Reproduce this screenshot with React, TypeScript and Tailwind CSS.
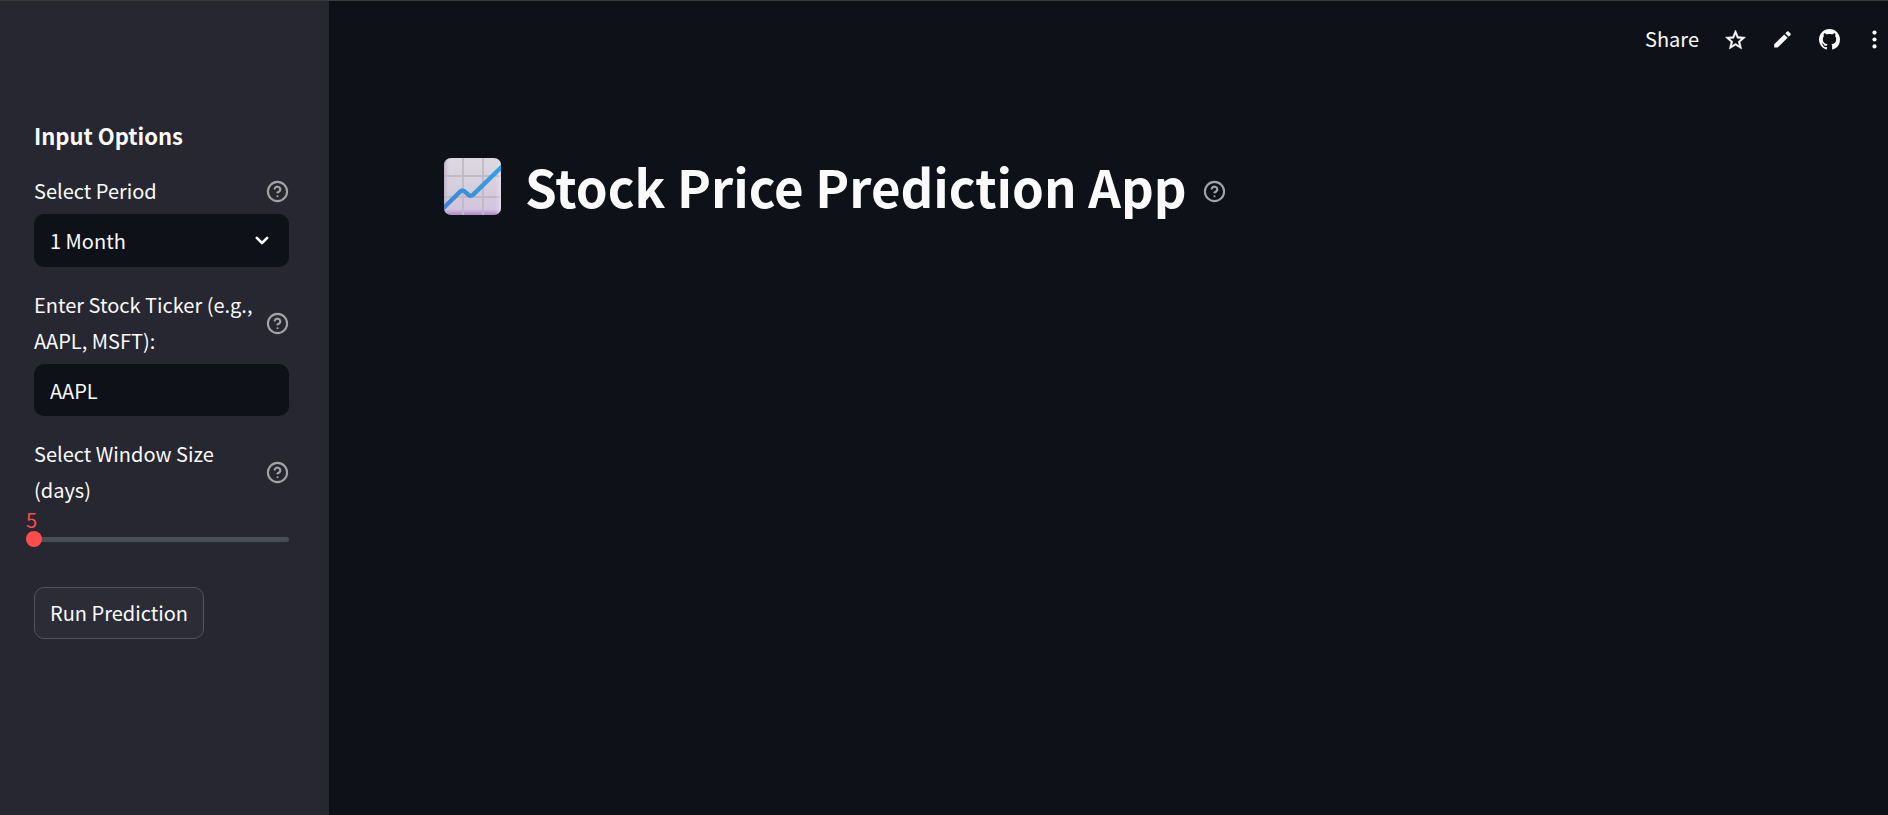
import { useState } from "react";

function HelpIcon() {
  return (
    <svg
      viewBox="0 0 24 24"
      className="size-[23px] shrink-0"
      fill="none"
      stroke="currentColor"
      strokeWidth="2.2"
      strokeLinecap="round"
      strokeLinejoin="round"
      aria-hidden="true"
    >
      <circle cx="12" cy="12" r="10" />
      <path d="M9.09 9a3 3 0 0 1 5.83 1c0 2-3 3-3 3" />
      <path d="M12 17h.01" />
    </svg>
  );
}

function HelpButton({ topic }: { topic: string }) {
  return (
    <button type="button" aria-label={`Help: ${topic}`} className="shrink-0 text-[#a3a3a7]">
      <HelpIcon />
    </button>
  );
}

function FieldLabel({ htmlFor, text }: { htmlFor: string; text: string }) {
  return (
    <div className="flex items-center justify-between gap-2">
      <label htmlFor={htmlFor} className="leading-9">
        {text}
      </label>
      <HelpButton topic={text} />
    </div>
  );
}

function ChartEmoji() {
  return (
    <svg viewBox="0 0 57 57" className="size-[57px] shrink-0" role="img" aria-label="Chart increasing">
      <defs>
        <linearGradient id="paper" x1="0" y1="0" x2="0" y2="1">
          <stop offset="0" stopColor="#dcd8df" />
          <stop offset="0.5" stopColor="#d6cedd" />
          <stop offset="0.9" stopColor="#d3c3df" />
          <stop offset="1" stopColor="#a98bc4" />
        </linearGradient>
        <linearGradient id="edge" x1="0" y1="0" x2="1" y2="0">
          <stop offset="0" stopColor="#b5a9bf" stopOpacity="0.8" />
          <stop offset="0.1" stopColor="#d6cedd" stopOpacity="0" />
          <stop offset="0.9" stopColor="#e6dfe9" stopOpacity="0" />
          <stop offset="1" stopColor="#e6dfe9" stopOpacity="0.8" />
        </linearGradient>
        <linearGradient id="trend" x1="0" y1="1" x2="1" y2="0">
          <stop offset="0" stopColor="#3f86d0" />
          <stop offset="1" stopColor="#2fa4ea" />
        </linearGradient>
        <clipPath id="sheet">
          <rect width="57" height="57" rx="7" />
        </clipPath>
      </defs>
      <g clipPath="url(#sheet)">
        <rect width="57" height="57" fill="url(#paper)" />
        <path d="M19 0v57M39 0v57M0 18h57M0 39h57" stroke="#bfb9c5" strokeWidth="1.8" />
        <rect width="57" height="57" fill="url(#edge)" />
        <path
          d="M-2 51.5 16.2 33.6Q18.4 31.4 20.6 33.4L24.4 36.8Q26.8 38.8 29.2 36.6L59 7.5"
          fill="none"
          stroke="url(#trend)"
          strokeWidth="4.4"
          strokeLinejoin="round"
        />
      </g>
    </svg>
  );
}

function Toolbar() {
  return (
    <header className="flex h-[76px] items-center justify-end gap-[26px] pr-[5px]">
      <button type="button" className="leading-9">
        Share
      </button>
      <button type="button" aria-label="Favorite">
        <svg
          viewBox="1.5 1 21 21"
          className="size-[21px]"
          fill="currentColor"
          stroke="currentColor"
          strokeWidth="0.5"
          aria-hidden="true"
        >
          <path d="m22 9.24-7.19-.62L12 2 9.19 8.63 2 9.24l5.46 4.73L5.82 21 12 17.27 18.18 21l-1.63-7.03zM12 15.4l-3.76 2.27 1-4.28-3.32-2.88 4.38-.38L12 6.1l1.71 4.04 4.38.38-3.32 2.88 1 4.28z" />
        </svg>
      </button>
      <button type="button" aria-label="Edit">
        <svg viewBox="0 0 21 21" className="size-[21px]" fill="currentColor" aria-hidden="true">
          <path d="M2.2 15.2 12.2 5.4l3.4 3.4L5.6 18.6H2.2zM13.3 4.3l1.8-1.8a1 1 0 0 1 1.4 0l2 2a1 1 0 0 1 0 1.4l-1.8 1.8z" />
        </svg>
      </button>
      <button type="button" aria-label="View source">
        <svg viewBox="0 0 16 16" className="size-[21px]" fill="currentColor" aria-hidden="true">
          <path d="M8 0C3.58 0 0 3.58 0 8c0 3.54 2.29 6.53 5.47 7.59.4.07.55-.17.55-.38 0-.19-.01-.82-.01-1.49-2.01.37-2.53-.49-2.69-.94-.09-.23-.48-.94-.82-1.13-.28-.15-.68-.52-.01-.53.63-.01 1.08.58 1.23.82.72 1.21 1.87.87 2.33.66.07-.52.28-.87.51-1.07-1.78-.2-3.64-.89-3.64-3.95 0-.87.31-1.59.82-2.15-.08-.2-.36-1.02.08-2.12 0 0 .67-.21 2.2.82.64-.18 1.32-.27 2-.27s1.36.09 2 .27c1.53-1.04 2.2-.82 2.2-.82.44 1.1.16 1.92.08 2.12.51.56.82 1.27.82 2.15 0 3.07-1.87 3.75-3.65 3.95.29.25.54.73.54 1.48 0 1.07-.01 1.93-.01 2.2 0 .21.15.46.55.38A8.01 8.01 0 0 0 16 8c0-4.42-3.58-8-8-8" />
        </svg>
      </button>
      <button type="button" aria-label="More options">
        <svg viewBox="0 0 17 21" className="h-[21px] w-[17px]" fill="currentColor" aria-hidden="true">
          <circle cx="8.5" cy="3.6" r="2.1" />
          <circle cx="8.5" cy="10.5" r="2.1" />
          <circle cx="8.5" cy="17.4" r="2.1" />
        </svg>
      </button>
    </header>
  );
}

export default function App() {
  const [period, setPeriod] = useState("1 Month");
  const [ticker, setTicker] = useState("AAPL");
  const [days, setDays] = useState(5);

  return (
    <div className="flex min-h-screen border-t border-[#3a3b3d] bg-[#0e1117] font-['Noto_Sans_CJK_SC',sans-serif] text-[20px] text-[#fafafa]">
      <aside className="w-[329px] shrink-0 bg-[#262730] pt-[116px] pr-10 pl-[34px]">
        <h2 className="text-[22px] leading-9 font-bold">Input Options</h2>

        <form className="mt-5 flex flex-col gap-5" onSubmit={(e) => e.preventDefault()}>
          <div className="flex flex-col gap-[5px]">
            <FieldLabel htmlFor="period" text="Select Period" />
            <div className="grid items-center">
              <select
                id="period"
                value={period}
                onChange={(e) => setPeriod(e.target.value)}
                className="col-start-1 row-start-1 h-[53px] w-full appearance-none rounded-[10px] bg-[#0e1117] px-4 outline-none"
              >
                <option>1 Month</option>
                <option>3 Months</option>
                <option>6 Months</option>
                <option>1 Year</option>
              </select>
              <svg
                viewBox="0 0 14 9"
                className="pointer-events-none col-start-1 row-start-1 mr-5 h-[9px] w-[14px] justify-self-end"
                fill="none"
                stroke="currentColor"
                strokeWidth="2.6"
                strokeLinecap="round"
                strokeLinejoin="round"
                aria-hidden="true"
              >
                <path d="M1.8 1.8 7 7l5.2-5.2" />
              </svg>
            </div>
          </div>

          <div className="flex flex-col gap-[5px]">
            <FieldLabel htmlFor="ticker" text="Enter Stock Ticker (e.g., AAPL, MSFT):" />
            <input
              id="ticker"
              type="text"
              value={ticker}
              onChange={(e) => setTicker(e.target.value)}
              className="h-[52px] w-full rounded-[10px] bg-[#0e1117] px-4 outline-none"
            />
          </div>

          <div className="flex flex-col">
            <FieldLabel htmlFor="days" text="Select Window Size (days)" />
            <output htmlFor="days" className="-ml-2 h-[23px] leading-6 text-[#ff4b4b]">
              {days}
            </output>
            <div className="-mx-2 grid items-center">
              <div className="col-start-1 row-start-1 mx-2 h-[5px] rounded-full bg-[#4a4c57]" />
              <input
                id="days"
                type="range"
                min={5}
                max={60}
                value={days}
                onChange={(e) => setDays(Number(e.target.value))}
                className="col-start-1 row-start-1 h-4 w-full appearance-none bg-transparent outline-none [&::-webkit-slider-thumb]:size-4 [&::-webkit-slider-thumb]:appearance-none [&::-webkit-slider-thumb]:rounded-full [&::-webkit-slider-thumb]:bg-[#ff4b4b]"
              />
            </div>
          </div>

          <button
            type="submit"
            className="mt-5 h-[52px] self-start rounded-[10px] border border-[#52535b] bg-[#2b2c36] px-[15px]"
          >
            Run Prediction
          </button>
        </form>
      </aside>

      <div className="min-w-0 flex-1">
        <Toolbar />
        <main className="px-[115px] pt-[67px]">
          <div className="flex items-center">
            <ChartEmoji />
            <h1 className="ml-6 text-[51px] leading-[84px] font-bold">Stock Price Prediction App</h1>
            <div className="mt-2.5 ml-4 flex">
              <HelpButton topic="Stock Price Prediction App" />
            </div>
          </div>
        </main>
      </div>
    </div>
  );
}
